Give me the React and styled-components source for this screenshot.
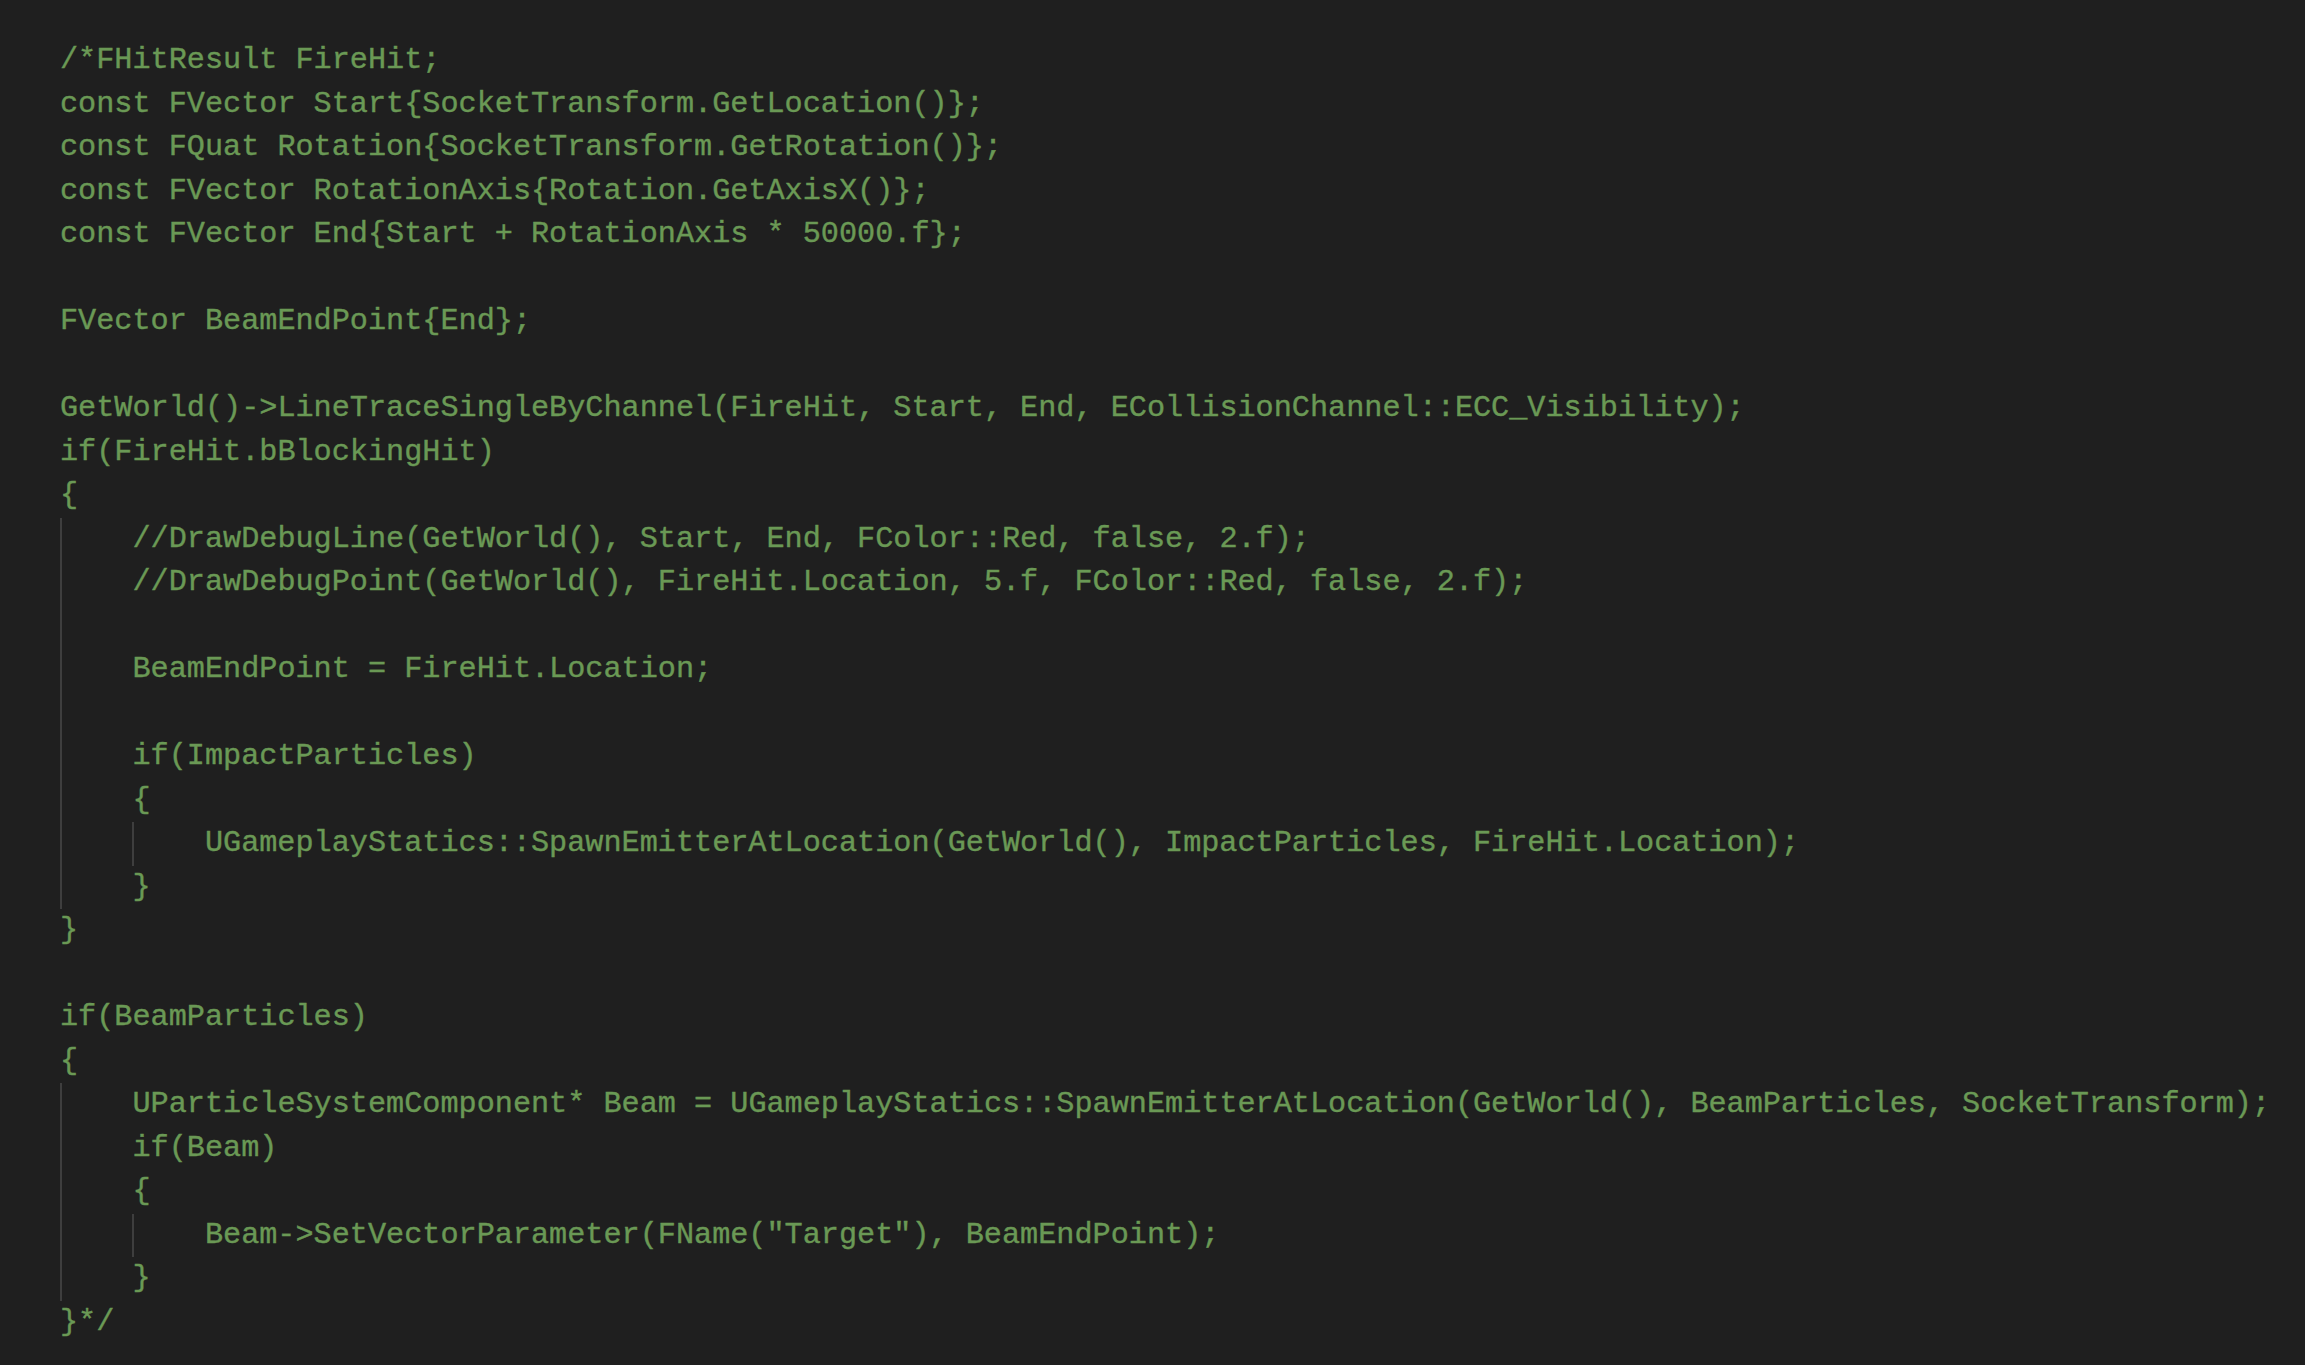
import React from 'react';
import styled, { createGlobalStyle } from 'styled-components';

// each row: [indent, guides, text]
const lines = [
  [0, 0, '/*FHitResult FireHit;'],
  [0, 0, 'const FVector Start{SocketTransform.GetLocation()};'],
  [0, 0, 'const FQuat Rotation{SocketTransform.GetRotation()};'],
  [0, 0, 'const FVector RotationAxis{Rotation.GetAxisX()};'],
  [0, 0, 'const FVector End{Start + RotationAxis * 50000.f};'],
  [0, 0, ''],
  [0, 0, 'FVector BeamEndPoint{End};'],
  [0, 0, ''],
  [0, 0, 'GetWorld()->LineTraceSingleByChannel(FireHit, Start, End, ECollisionChannel::ECC_Visibility);'],
  [0, 0, 'if(FireHit.bBlockingHit)'],
  [0, 0, '{'],
  [1, 1, '//DrawDebugLine(GetWorld(), Start, End, FColor::Red, false, 2.f);'],
  [1, 1, '//DrawDebugPoint(GetWorld(), FireHit.Location, 5.f, FColor::Red, false, 2.f);'],
  [1, 1, ''],
  [1, 1, 'BeamEndPoint = FireHit.Location;'],
  [1, 1, ''],
  [1, 1, 'if(ImpactParticles)'],
  [1, 1, '{'],
  [2, 2, 'UGameplayStatics::SpawnEmitterAtLocation(GetWorld(), ImpactParticles, FireHit.Location);'],
  [1, 1, '}'],
  [0, 0, '}'],
  [0, 0, ''],
  [0, 0, 'if(BeamParticles)'],
  [0, 0, '{'],
  [1, 1, 'UParticleSystemComponent* Beam = UGameplayStatics::SpawnEmitterAtLocation(GetWorld(), BeamParticles, SocketTransform);'],
  [1, 1, 'if(Beam)'],
  [1, 1, '{'],
  [2, 2, 'Beam->SetVectorParameter(FName("Target"), BeamEndPoint);'],
  [1, 1, '}'],
  [0, 0, '}*/'],
];

const GlobalStyle = createGlobalStyle`
  html, body {
    margin: 0;
    padding: 0;
    background: #1f1f1f;
  }
`;

const Editor = styled.div`
  width: 2305px;
  height: 1365px;
  box-sizing: border-box;
  padding: 39px 0 0 60px;
  background: #1f1f1f;
  overflow: hidden;
  font-family: "Liberation Mono", monospace;
  font-size: 30.2px;
  color: #6a9955;
  -webkit-text-stroke: 0.4px #6a9955;
`;

const Row = styled.div`
  display: flex;
  height: 43.5px;
  line-height: 43.5px;
  white-space: pre;
`;

const Indent = styled.span`
  flex: none;
  width: 4ch;
  box-sizing: border-box;
  border-left: 2px solid ${p => (p.$guide ? '#3e3e3e' : 'transparent')};
`;

const Code = styled.span`
  flex: none;
`;

export default function App() {
  return (
    <>
      <GlobalStyle />
      <Editor>
        {lines.map(([indent, guides, text], i) => (
          <Row key={i}>
            {Array.from({ length: indent }).map((_, j) => (
              <Indent key={j} $guide={j < guides} />
            ))}
            <Code>{text}</Code>
          </Row>
        ))}
      </Editor>
    </>
  );
}
